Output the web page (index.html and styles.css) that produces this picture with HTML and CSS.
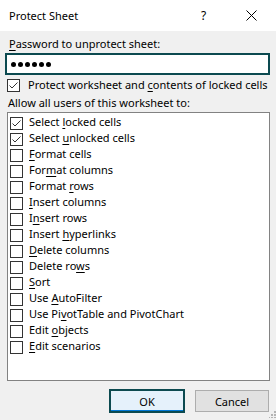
FILE: index.html
```html
<!DOCTYPE html>
<html>
<head>
<meta charset="utf-8">
<link rel="stylesheet" href="styles.css">
</head>
<body>
<div class="dialog">
  <div class="titlebar">
    <span class="title">Protect Sheet</span>
    <span class="help">?</span>
    <svg class="close" width="11" height="11" viewBox="0 0 11 11"><path d="M0.5 0.5 L10.5 10.5 M10.5 0.5 L0.5 10.5" stroke="#000" stroke-width="1" fill="none"/></svg>
  </div>
  <div class="body">
    <div class="label"><u>P</u>assword to unprotect sheet:</div>
    <div class="input"><span class="dot"></span><span class="dot"></span><span class="dot"></span><span class="dot"></span><span class="dot"></span><span class="dot"></span></div>
    <div class="row protect"><span class="cb checked"><svg width="11" height="11" viewBox="0 0 11 11"><path d="M1.5 5.5 L4 8 L9.5 2.5" stroke="#333" stroke-width="1" fill="none"/></svg></span><span>Protect worksheet and <u>c</u>ontents of locked cells</span></div>
    <div class="label allow">Allow all users of this worksheet to:</div>
    <div class="list">
      <div class="item"><span class="cb checked"><svg width="11" height="11" viewBox="0 0 11 11"><path d="M1.5 5.5 L4 8 L9.5 2.5" stroke="#333" stroke-width="1" fill="none"/></svg></span><span>Select <u>l</u>ocked cells</span></div>
      <div class="item"><span class="cb checked"><svg width="11" height="11" viewBox="0 0 11 11"><path d="M1.5 5.5 L4 8 L9.5 2.5" stroke="#333" stroke-width="1" fill="none"/></svg></span><span>Select <u>u</u>nlocked cells</span></div>
      <div class="item"><span class="cb"></span><span><u>F</u>ormat cells</span></div>
      <div class="item"><span class="cb"></span><span>For<u>m</u>at columns</span></div>
      <div class="item"><span class="cb"></span><span>Format <u>r</u>ows</span></div>
      <div class="item"><span class="cb"></span><span><u>I</u>nsert columns</span></div>
      <div class="item"><span class="cb"></span><span>I<u>n</u>sert rows</span></div>
      <div class="item"><span class="cb"></span><span>Insert <u>h</u>yperlinks</span></div>
      <div class="item"><span class="cb"></span><span><u>D</u>elete columns</span></div>
      <div class="item"><span class="cb"></span><span>Delete ro<u>w</u>s</span></div>
      <div class="item"><span class="cb"></span><span><u>S</u>ort</span></div>
      <div class="item"><span class="cb"></span><span>Use <u>A</u>utoFilter</span></div>
      <div class="item"><span class="cb"></span><span>Use Pi<u>v</u>otTable and PivotChart</span></div>
      <div class="item"><span class="cb"></span><span>Edit <u>o</u>bjects</span></div>
      <div class="item"><span class="cb"></span><span><u>E</u>dit scenarios</span></div>
    </div>
    <div class="buttons">
      <div class="btn ok">OK</div>
      <div class="btn cancel">Cancel</div>
    </div>
  </div>
  <svg class="grip" width="7" height="7" viewBox="0 0 7 7">
    <rect x="5" y="0" width="2" height="2" fill="#b4b4b4"/>
    <rect x="2" y="3" width="2" height="2" fill="#b4b4b4"/>
    <rect x="5" y="3" width="2" height="2" fill="#b4b4b4"/>
    <rect x="-1" y="6" width="2" height="2" fill="#b4b4b4"/>
    <rect x="2" y="6" width="2" height="2" fill="#b4b4b4"/>
    <rect x="5" y="6" width="2" height="2" fill="#b4b4b4"/>
  </svg>
</div>
</body>
</html>
```
FILE: styles.css
```css
* { box-sizing: border-box; }
html, body { margin: 0; padding: 0; }
body {
  width: 276px;
  height: 420px;
  background: #f0f0f0;
  font-family: "Noto Sans", "Open Sans", sans-serif;
  font-size: 11px;
  color: #000;
  overflow: hidden;
}
.dialog {
  position: relative;
  width: 276px;
  height: 420px;
}
u { text-decoration: underline; text-underline-offset: 2px; text-decoration-thickness: 1px; }
.titlebar {
  height: 31px;
  background: #fff;
  display: flex;
  align-items: center;
}
.title {
  margin-left: 9px;
  font-size: 11px;
  flex: 1;
}
.help {
  width: 8px;
  margin-right: 37px;
  font-size: 12px;
}
.close {
  margin-right: 19px;
  display: block;
}
.body {
  padding: 0 0 0 7px;
}
.label {
  margin-top: 5px;
  line-height: 16px;
  padding-left: 2px;
}
.input {
  margin-top: 1px;
  margin-left: -2px;
  width: 265px;
  height: 22px;
  border: 2px solid #0c4a50;
  background: #fff;
  display: flex;
  align-items: center;
  gap: 2px;
  padding-left: 4px;
}
.dot {
  width: 5px;
  height: 5px;
  border-radius: 50%;
  background: #000;
}
.row, .item {
  display: flex;
  align-items: flex-start;
  line-height: 16px;
  white-space: nowrap;
}
.protect {
  margin-top: 2px;
  height: 16px;
}
.cb {
  width: 13px;
  height: 13px;
  border: 1px solid #333;
  background: #fff;
  margin-top: 2px;
  margin-right: 6px;
  flex: none;
  display: flex;
}
.protect .cb { margin-right: 8px; }
.cb svg { display: block; }
.item .cb { margin-top: 3px; }
.allow {
  margin-top: 2px;
  padding-left: 1px;
}
.list {
  margin-top: 1px;
  width: 263px;
  height: 269px;
  border: 1px solid #828282;
  background: #fff;
  padding: 1px 0 0 2px;
}
.item { height: 16px; }
.buttons {
  margin-top: 8px;
  display: flex;
  align-items: flex-start;
  padding-left: 102px;
}
.btn {
  display: flex;
  align-items: center;
  justify-content: center;
  line-height: 1;
}
.ok {
  width: 76px;
  height: 24px;
  border: 2px solid #0c4a50;
  background: #e5f1fb;
  box-shadow: inset 0 -1px 0 #0078d7;
}
.cancel {
  margin-left: 10px;
  margin-top: 1px;
  width: 74px;
  height: 22px;
  border: 1px solid #adadad;
  background: #e1e1e1;
}
.grip {
  position: absolute;
  right: 0;
  bottom: 2px;
}
```
